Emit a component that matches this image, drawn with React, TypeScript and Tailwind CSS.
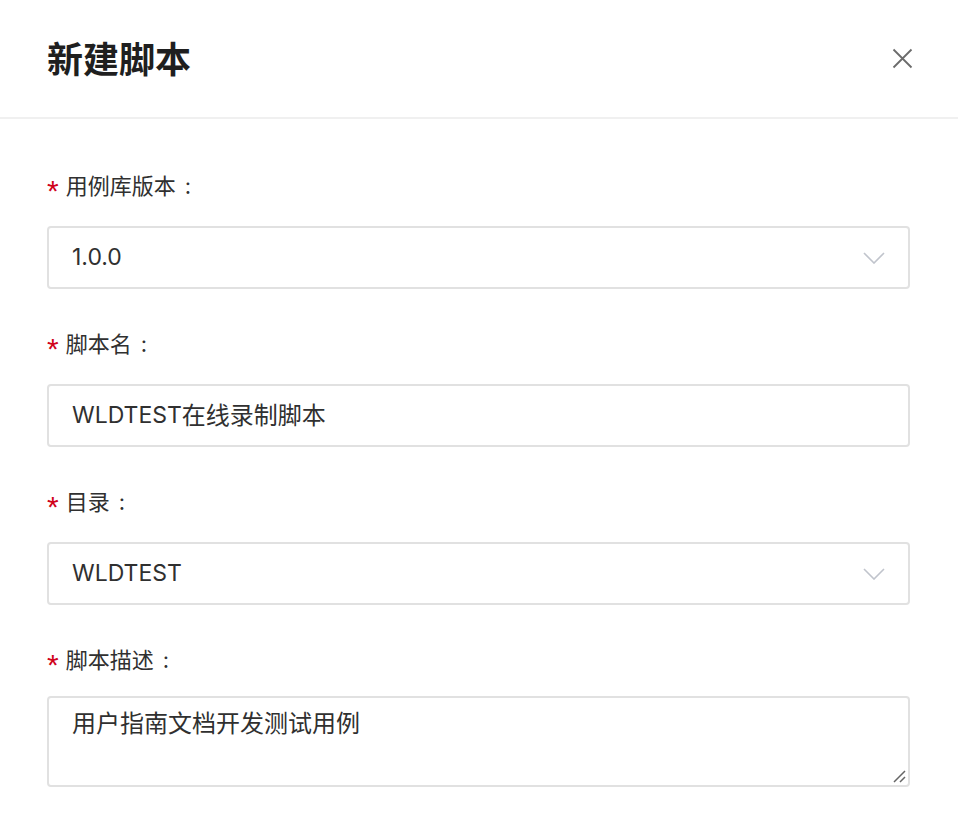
import React from "react";

const font = { fontFamily: 'Inter, "Noto Sans CJK SC", "Noto Sans", sans-serif' };

function Chevron() {
  return (
    <svg width="22" height="12" viewBox="0 0 22 12" fill="none" className="shrink-0">
      <path d="M1 1 L11 11 L21 1" stroke="#c0c4cc" strokeWidth="1.6" />
    </svg>
  );
}

function Label({ text }: { text: string }) {
  return (
    <div className="flex items-center h-[40px] text-[22px] text-[#303030]">
      <span className="text-[#d0021b] mr-[7px] text-[30px] leading-none pt-[10px]" style={{ fontFamily: '"Liberation Sans", sans-serif' }}>*</span>
      <span>{text}</span>
      <span className="pl-[9px]">:</span>
    </div>
  );
}

export default function App() {
  return (
    <div className="w-[958px] h-[828px] bg-white overflow-hidden" style={font}>
      <div className="h-[119px] flex items-center justify-between pl-[47px] pr-[45px] border-b-[2px] border-[#f0f0f0]">
        <div className="text-[36px] font-bold text-[#1f1f1f] leading-none pt-[2px]">新建脚本</div>
        <svg width="21" height="21" viewBox="0 0 21 21" fill="none">
          <path d="M1.5 1.5 L19.5 19.5 M19.5 1.5 L1.5 19.5" stroke="#6b6b6b" strokeWidth="1.8" />
        </svg>
      </div>
      <div className="pl-[47px] pr-[48px] pt-[47px] flex flex-col">
        <Label text="用例库版本" />
        <div className="mt-[20px] h-[63px] border-[2px] border-[#e1e1e1] rounded-[4px] flex items-center justify-between pl-[23px] pr-[23px] text-[23px] text-[#303030]">
          <span>1.0.0</span>
          <Chevron />
        </div>
        <div className="mt-[35px]">
          <Label text="脚本名" />
        </div>
        <div className="mt-[20px] h-[63px] border-[2px] border-[#e1e1e1] rounded-[4px] flex items-center pl-[23px] text-[24px] text-[#303030]">
          <span className="text-[23px]">WLDTEST</span>在线录制脚本
        </div>
        <div className="mt-[35px]">
          <Label text="目录" />
        </div>
        <div className="mt-[20px] h-[63px] border-[2px] border-[#e1e1e1] rounded-[4px] flex items-center justify-between pl-[23px] pr-[23px] text-[23px] text-[#303030]">
          <span>WLDTEST</span>
          <Chevron />
        </div>
        <div className="mt-[35px]">
          <Label text="脚本描述" />
        </div>
        <div className="mt-[16px] relative h-[91px] border-[2px] border-[#e1e1e1] rounded-[4px] pl-[23px] pt-[8px] text-[24px] text-[#303030]">
          用户指南文档开发测试用例
          <svg className="absolute right-[2px] bottom-[2px]" width="14" height="14" viewBox="0 0 14 14" fill="none">
            <path d="M2 13 L13 2 M8 13 L13 8" stroke="#666666" strokeWidth="1.5" />
          </svg>
        </div>
      </div>
    </div>
  );
}
